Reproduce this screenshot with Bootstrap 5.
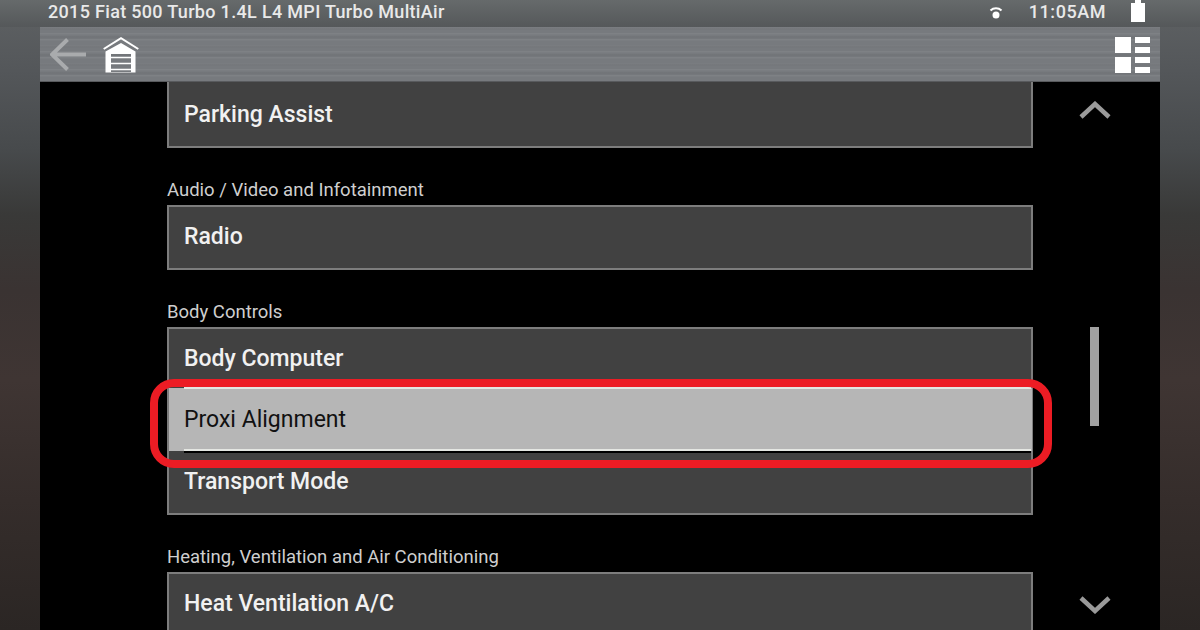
<!DOCTYPE html>
<html lang="en">
  <head>
    <meta charset="utf-8" />
    <meta name="viewport" content="width=device-width, initial-scale=1" />
    <title>Proxi Alignment</title>
    <link href="https://cdn.jsdelivr.net/npm/bootstrap@5.3.3/dist/css/bootstrap.min.css" rel="stylesheet" />
    <style>
      html, body { height: 630px; overflow: hidden; }
      body {
        font-family: Roboto, "Liberation Sans", sans-serif;
        background: linear-gradient(180deg, #5f6264 0, #54575a 70px, #474a4c 150px, #393938 215px, #3a3332 290px, #3f3533 380px, #352d2b 500px, #2b2624 630px);
      }
      .tablet-frame { width: 1200px; height: 630px; padding: 0 40px; overflow: hidden; }
      .screen { position: relative; height: 630px; }
      .status-row { height: 27px; margin: 0 -40px; padding: 0 55px 4px 48px; color: #e9e9e9; font-size: 18px; font-weight: 500; letter-spacing: .32px; background: linear-gradient(180deg, #666a6b, #55585a); }
      .wifi-icon { margin-right: 26px; }
      .clock-text { margin-right: 25px; letter-spacing: .55px; }
      .tool-row {
        height: 55px; padding: 0 10px;
        background:
          repeating-linear-gradient(180deg, rgba(255,255,255,.05) 0, rgba(255,255,255,.05) 1px, rgba(0,0,0,0) 2px, rgba(0,0,0,0) 6px),
          repeating-linear-gradient(180deg, rgba(0,0,0,.04) 0, rgba(0,0,0,.04) 2px, rgba(0,0,0,0) 3px, rgba(0,0,0,0) 9px),
          #777a7e;
        box-shadow: inset 0 -1px 0 rgba(40,40,40,.4);
      }
      .list-pane { height: 548px; background: #000; overflow: hidden; }
      .menu-col { width: 866px; margin-left: 127px; flex: none; }
      .menu-box { border: 2px solid #7d7d7d; background: #414141; }
      .first-box { border-top: 0; }
      .menu-item { height: 61.33px; padding-left: 15px; color: #f1f1f1; font-size: 23px; font-weight: 500; display: flex; align-items: center; }
      .first-item { height: 64px; padding-top: 3px; }
      .single-item { height: 61px; padding-bottom: 1px; }
      .group-label { color: #cfcfcf; font-size: 18.5px; line-height: 22px; margin: 31px 0 4px; }
      .side-col { width: 127px; flex: none; padding-right: 4px; }
      .scroll-thumb { width: 9px; height: 99px; background: #a1a1a1; margin-top: 208px; }
      .chevron-up { margin-top: 19px; }
      .chevron-down { margin-bottom: 16px; }
      .proxi-row { position: absolute; left: 129px; top: 388px; width: 863px; height: 63px; background: #b6b6b6; color: #111; font-size: 23px; padding: 2px 0 0 15px; display: flex; align-items: center; }
      .proxi-row::before, .proxi-row::after { content: ""; position: absolute; left: 15px; right: 1px; height: 2px; background: #e4e6e2; }
      .proxi-row::before { top: -1px; }
      .proxi-row::after { bottom: 0; box-shadow: 0 2px 0 #000; }
      .red-ring { position: absolute; left: 110px; top: 379px; width: 902px; height: 89px; border: 8px solid #ec1c24; border-radius: 24px; }
    </style>
  </head>
  <body>
    <div class="tablet-frame">
      <div class="screen d-flex flex-column">
        <div class="status-row d-flex align-items-center justify-content-between position-relative">
          <span>2015 Fiat 500 Turbo 1.4L L4 MPI Turbo MultiAir</span>
          <div class="d-flex align-items-center">
            <svg width="14" height="14" viewBox="0 0 14 14" class="wifi-icon"><path d="M1.500 5.500A8 8 0 0 1 12.500 5.500" fill="none" stroke="#fff" stroke-width="2"/><circle cx="7" cy="10" r="3.500" fill="#fff"/></svg>
            <span class="clock-text">11:05AM</span>
            <svg width="14" height="23" viewBox="0 0 14 23"><path d="M4 0h6v3h4v19H0V3h4z" fill="#fff"/></svg>
          </div>
        </div>
        <div class="tool-row d-flex align-items-center justify-content-between position-relative">
          <div class="d-flex align-items-center gap-3">
            <svg width="37" height="37" viewBox="0 0 37 37"><path d="M17.500 3.500L2 18.500L17.500 33.500M2 18.500H36" fill="none" stroke="#a9abad" stroke-width="4"/></svg>
            <svg width="36" height="36" viewBox="0 0 36 36"><path d="M.7 12L18 1.200L35.300 12" fill="none" stroke="#fff" stroke-width="2"/><path fill-rule="evenodd" d="M18 6L32.500 14.500V35.500H2.500V14.500ZM8 17V35H28V17Z" fill="#fff"/><path d="M8 20.500H28M8 26.500H28M8 32.500H28" stroke="#fff" stroke-width="1.500"/></svg>
          </div>
          <svg width="35" height="36" viewBox="0 0 35 36" fill="#fff"><rect x="0" y="0" width="16" height="16"/><rect x="0" y="20" width="16" height="16"/><rect x="20" y="0" width="15" height="6"/><rect x="20" y="10" width="15" height="6"/><rect x="20" y="20" width="15" height="6"/><rect x="20" y="30" width="15" height="6"/></svg>
        </div>
        <div class="list-pane d-flex">
          <div class="menu-col">
            <div class="menu-box first-box"><div class="menu-item first-item">Parking Assist</div></div>
            <div class="group-label">Audio / Video and Infotainment</div>
            <div class="menu-box"><div class="menu-item single-item">Radio</div></div>
            <div class="group-label">Body Controls</div>
            <div class="menu-box">
              <div class="menu-item">Body Computer</div>
              <div class="menu-item">&nbsp;</div>
              <div class="menu-item">Transport Mode</div>
            </div>
            <div class="group-label">Heating, Ventilation and Air Conditioning</div>
            <div class="menu-box"><div class="menu-item">Heat Ventilation A/C</div></div>
          </div>
          <div class="side-col d-flex flex-column align-items-center">
            <svg width="32" height="18" viewBox="0 0 32 18" class="chevron-up"><path d="M2 16L16 3L30 16" fill="none" stroke="#9a9a9a" stroke-width="4.500"/></svg>
            <div class="scroll-thumb"></div>
            <svg width="32" height="18" viewBox="0 0 32 18" class="chevron-down mt-auto"><path d="M2 2L16 15L30 2" fill="none" stroke="#9a9a9a" stroke-width="4.500"/></svg>
          </div>
        </div>
        <div class="proxi-row">Proxi Alignment</div>
        <div class="red-ring"></div>
      </div>
    </div>
    <script src="https://cdn.jsdelivr.net/npm/bootstrap@5.3.3/dist/js/bootstrap.bundle.min.js"></script>
  </body>
</html>
